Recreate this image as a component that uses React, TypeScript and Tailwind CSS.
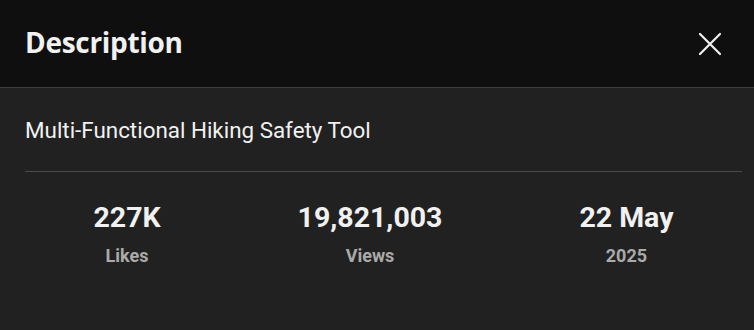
import React from "react";

const stats = [
  { value: "227K", label: "Likes" },
  { value: "19,821,003", label: "Views" },
  { value: "22 May", label: "2025" },
];

function CloseIcon() {
  return (
    <svg width="24" height="24" viewBox="0 0 24 24" fill="none">
      <path d="M2 2 L22 22 M22 2 L2 22" stroke="#f1f1f1" strokeWidth="2.2" strokeLinecap="round" />
    </svg>
  );
}

export default function App() {
  return (
    <div className="min-h-screen bg-[#212121] flex flex-col font-['Roboto',sans-serif]">
      <header className="h-[88px] bg-[#0f0f0f] border-b border-[#3d3d3d] flex items-center justify-between pl-[25px] pr-[32px]">
        <h1 className="-mt-[3px] text-[28px] font-bold text-[#f1f1f1] font-['Open_Sans',sans-serif] tracking-[-0.3px]">
          Description
        </h1>
        <button className="w-[24px] h-[24px] flex items-center justify-center">
          <CloseIcon />
        </button>
      </header>

      <main className="pl-[25px] pr-[12px] pt-[29px]">
        <p className="text-[22.4px] leading-[26px] text-[#f1f1f1]">
          Multi-Functional Hiking Safety Tool
        </p>
        <div className="mt-[28px] h-px bg-[#4a4a4a]" />
        <div className="mt-[30px] flex justify-around">
          {stats.map((s) => (
            <div key={s.label} className="flex flex-col items-center">
              <span className="text-[28.5px] leading-[32px] font-bold text-[#f1f1f1]">{s.value}</span>
              <span className="mt-[10px] text-[18px] leading-[24px] font-bold text-[#aaaaaa]">{s.label}</span>
            </div>
          ))}
        </div>
      </main>
    </div>
  );
}
